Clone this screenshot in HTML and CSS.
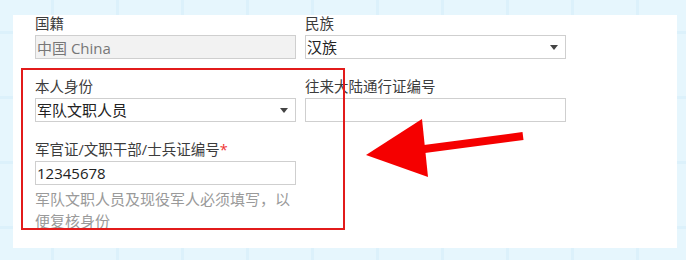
FILE: index.html
```html
<!DOCTYPE html>
<html>
<head>
    <title>身份信息</title>
    <link rel="stylesheet" href="styles.css">
</head>
<body>
    <div class="panel">
        <div class="form">
            <div class="field">
                <label>国籍</label>
                <input type="text" class="box disabled" value="中国 China" disabled>
            </div>
            <div class="field">
                <label>民族</label>
                <div class="box select">汉族</div>
            </div>
            <div class="field">
                <label>本人身份</label>
                <div class="box select">军队文职人员</div>
            </div>
            <div class="field">
                <label>往来大陆通行证编号</label>
                <input type="text" class="box" value="">
            </div>
            <div class="field">
                <label>军官证/文职干部/士兵证编号<span class="req">*</span></label>
                <input type="text" class="box" value="12345678">
                <p class="help">军队文职人员及现役军人必须填写，以便复核身份</p>
            </div>
        </div>

        <!-- annotation -->
        <div class="mark"></div>
        <svg class="arrow" width="664" height="233" viewBox="0 0 664 233">
            <line x1="400" y1="135.5" x2="510" y2="121" stroke="#f50000" stroke-width="8"/>
            <polygon points="353,140 409,104 415,162" fill="#f50000"/>
        </svg>
    </div>
</body>
</html>
```

FILE: styles.css
```css
body {
    margin: 0;
    width: 686px;
    height: 260px;
    overflow: hidden;
    font-family: "Open Sans", "Noto Sans CJK SC", sans-serif;
    background-color: #e6f6fd;
    background-image:
        linear-gradient(90deg, transparent 51px, #dcf1fb 51px, #dcf1fb 54px, transparent 54px),
        linear-gradient(180deg, transparent 31px, #dcf1fb 31px, #dcf1fb 34px, transparent 34px);
    background-size: 65px 100%, 100% 65px;
    background-position: 0 0, 0 0;
}

.panel {
    position: relative;
    margin: 15px 0 0 13px;
    width: 664px;
    height: 233px;
    background: #fff;
    overflow: hidden;
}

.form {
    display: grid;
    grid-template-columns: 261px 261px;
    column-gap: 9px;
    padding-left: 22px;
}

.field {
    margin-bottom: 19px;
}

label {
    display: block;
    height: 18px;
    line-height: 18px;
    margin-bottom: 2px;
    font-size: 14.5px;
    color: #3c3c3c;
}

.req {
    color: #e33;
}

.box {
    display: block;
    box-sizing: border-box;
    width: 261px;
    height: 24px;
    margin: 0;
    padding: 0 1px;
    border: 1px solid #cfcfcf;
    background: #fff;
    font-family: "Open Sans", "Noto Sans CJK SC", sans-serif;
    font-size: 15px;
    line-height: 22px;
    color: #222;
    outline: none;
}

.box.disabled {
    background: #f2f2f2;
    color: #777;
}

.select {
    position: relative;
}

.select::after {
    content: "";
    position: absolute;
    right: 7px;
    top: 9px;
    border-left: 4.5px solid transparent;
    border-right: 4.5px solid transparent;
    border-top: 5px solid #444;
}

.help {
    margin: 3px 0 0;
    font-size: 15px;
    line-height: 22px;
    color: #9a9a9a;
}

.mark {
    position: absolute;
    left: 8px;
    top: 53px;
    width: 320px;
    height: 158px;
    border: 2px solid #e21b1b;
}

.arrow {
    position: absolute;
    left: 0;
    top: 0;
    pointer-events: none;
}
```
